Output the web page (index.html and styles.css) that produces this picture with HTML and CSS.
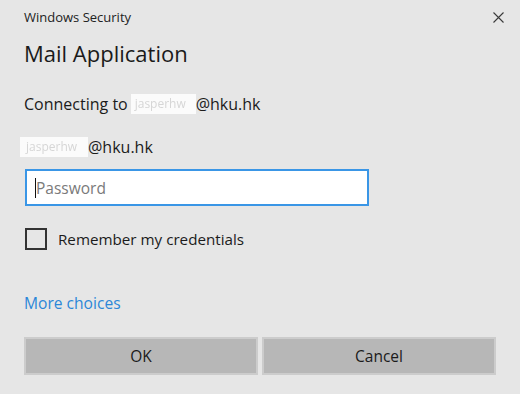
FILE: index.html
```html
<!DOCTYPE html>
<html lang="en">
<head>
<meta charset="utf-8">
<title>Windows Security</title>
<link rel="stylesheet" href="styles.css">
</head>
<body>
<div class="dialog">
  <div class="titlebar">
    <span class="app-name">Windows Security</span>
    <span class="close" aria-label="Close">
      <svg width="11" height="11" viewBox="0 0 11 11"><path d="M0.5 0.5 L10.5 10.5 M10.5 0.5 L0.5 10.5" stroke="#3a3a3a" stroke-width="1.1" fill="none"/></svg>
    </span>
  </div>
  <h1 class="heading">Mail Application</h1>
  <p class="line connecting">Connecting to <span class="redact r1">jasperhw</span>@hku.hk</p>
  <p class="line account"><span class="redact r2">jasperhw</span>@hku.hk</p>
  <div class="field">
    <span class="caret"></span><span class="placeholder">Password</span>
  </div>
  <div class="remember">
    <span class="checkbox"></span>
    <span class="remember-label">Remember my credentials</span>
  </div>
  <a class="more" href="#">More choices</a>
  <div class="buttons">
    <button class="btn">OK</button>
    <button class="btn">Cancel</button>
  </div>
</div>
</body>
</html>
```
FILE: styles.css
```css
html, body {
  margin: 0;
  padding: 0;
  background: #e6e6e6;
}
body {
  width: 520px;
  height: 394px;
  overflow: hidden;
  font-family: "Open Sans", "Noto Sans", sans-serif;
  color: #1b1b1b;
}
.dialog {
  display: flex;
  flex-direction: column;
  padding: 0 24px 0 24px;
}
.titlebar {
  height: 34px;
  display: flex;
  align-items: center;
  justify-content: space-between;
}
.app-name {
  font-size: 13px;
  color: #222;
}
.close {
  display: flex;
  margin-right: -8px;
}
.heading {
  margin: 5px 0 0 0;
  font-size: 22px;
  font-weight: 400;
  line-height: 28px;
  color: #1a1a1a;
}
.line {
  margin: 0;
  font-size: 16px;
  line-height: 20px;
  display: flex;
  align-items: center;
}
.connecting {
  margin-top: 27px;
}
.account {
  margin-top: 23px;
  margin-left: -4px;
}
.redact {
  display: inline-block;
  background: #fbfbfb;
  color: #d6d6d6;
  font-size: 12px;
  line-height: 20px;
  filter: blur(0.6px);
}
.r1 {
  width: 65px;
  margin-left: 3px;
  padding-left: 4px;
  box-sizing: border-box;
}
.r2 {
  width: 68px;
  padding-left: 6px;
  box-sizing: border-box;
}
.field {
  margin-top: 12px;
  margin-left: 1px;
  width: 344px;
  height: 37px;
  box-sizing: border-box;
  border: 2px solid #3a96e6;
  background: #fff;
  display: flex;
  align-items: center;
  padding-left: 8px;
}
.caret {
  width: 1px;
  height: 20px;
  background: #111;
}
.placeholder {
  font-size: 15.5px;
  color: #7a7a7a;
}
.remember {
  margin-top: 22px;
  margin-left: 1px;
  display: flex;
  align-items: center;
  gap: 11px;
  height: 22px;
}
.checkbox {
  width: 22px;
  height: 22px;
  box-sizing: border-box;
  border: 2px solid #333;
}
.remember-label {
  font-size: 15.2px;
}
.more {
  margin-top: 43px;
  font-size: 15.6px;
  line-height: 20px;
  color: #2b87d8;
  text-decoration: none;
  align-self: flex-start;
}
.buttons {
  margin-top: 24px;
  display: grid;
  grid-template-columns: 234px 234px;
  gap: 4px;
}
.btn {
  height: 38px;
  border: 2px solid #cccccc;
  background: #b7b7b7;
  font-family: inherit;
  font-size: 15.5px;
  color: #1b1b1b;
  padding: 0;
}
```
